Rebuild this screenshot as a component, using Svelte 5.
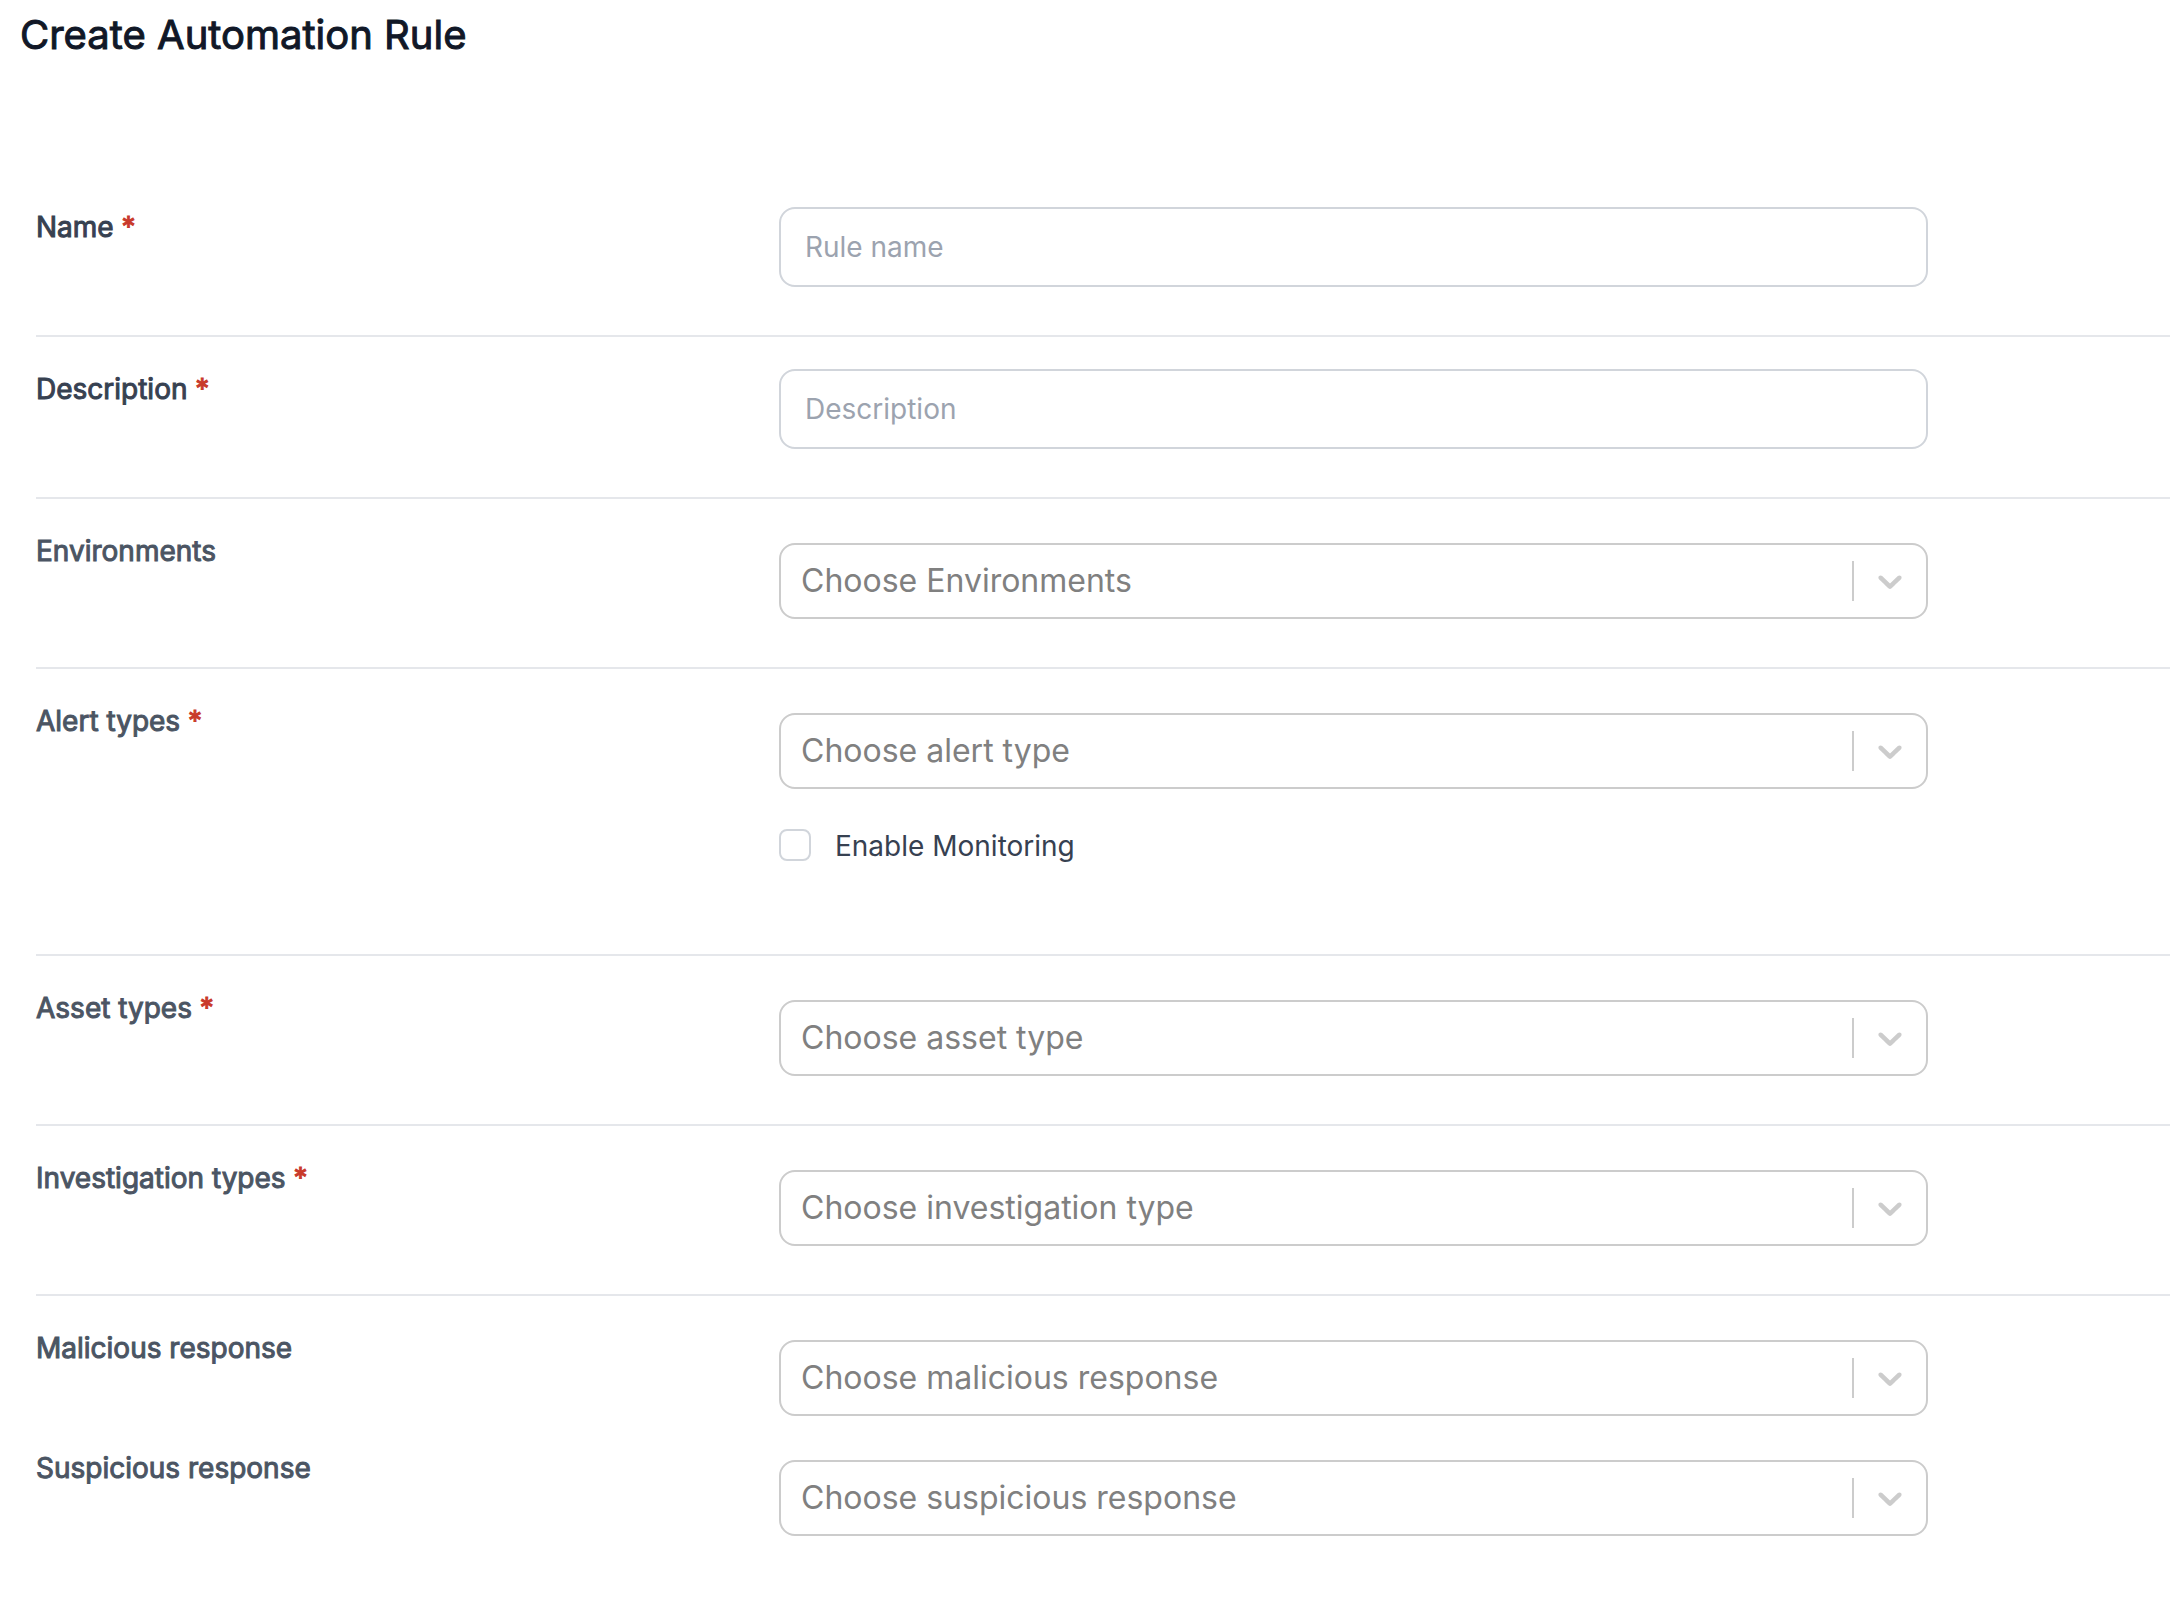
<script>
  const uid = 'rule';
  const rows = [
    { id: 'name', label: 'Name', required: true, kind: 'text', placeholder: 'Rule name' },
    { id: 'description', label: 'Description', required: true, kind: 'text', placeholder: 'Description' },
    { id: 'environments', label: 'Environments', kind: 'select', placeholder: 'Choose Environments' },
    {
      id: 'alert-types',
      label: 'Alert types',
      required: true,
      kind: 'select',
      placeholder: 'Choose alert type',
      checkbox: 'Enable Monitoring'
    },
    { id: 'asset-types', label: 'Asset types', required: true, kind: 'select', placeholder: 'Choose asset type' },
    {
      id: 'investigation-types',
      label: 'Investigation types',
      required: true,
      kind: 'select',
      placeholder: 'Choose investigation type'
    },
    { id: 'malicious', label: 'Malicious response', kind: 'select', placeholder: 'Choose malicious response' },
    {
      id: 'suspicious',
      label: 'Suspicious response',
      kind: 'select',
      placeholder: 'Choose suspicious response',
      joined: true
    }
  ];
</script>

<main>
  <h1>Create Automation Rule</h1>

  <form>
    {#each rows as row (row.id)}
      <div class="row" class:joined={row.joined}>
        <label class="label" class:dark={row.kind === 'text'} for="{uid}-{row.id}">
          {row.label}
          {#if row.required}<span class="required">*</span>{/if}
        </label>

        <div class="field">
          {#if row.kind === 'text'}
            <input class="text" id="{uid}-{row.id}" type="text" placeholder={row.placeholder} />
          {:else}
            <div class="select">
              <select id="{uid}-{row.id}">
                <option value="">{row.placeholder}</option>
              </select>
              <span class="indicator" aria-hidden="true">
                <svg viewBox="0 0 20 20">
                  <path
                    d="M4.516 7.548c0.436-0.446 1.043-0.481 1.576 0l3.908 3.747 3.908-3.747c0.533-0.481 1.141-0.446 1.574 0 0.436 0.445 0.408 1.197 0 1.615-0.406 0.418-4.695 4.502-4.695 4.502-0.217 0.223-0.502 0.335-0.787 0.335s-0.57-0.112-0.789-0.335c0 0-4.287-4.084-4.695-4.502s-0.436-1.17 0-1.615z"
                  />
                </svg>
              </span>
            </div>
          {/if}

          {#if row.checkbox}
            <label class="check">
              <input type="checkbox" />
              {row.checkbox}
            </label>
          {/if}
        </div>
      </div>
    {/each}
  </form>
</main>

<style>
  :global(body) {
    background: #fff;
    font-family: Inter, 'Liberation Sans', sans-serif;
  }

  main {
    padding: 7px 0 0 20px;
  }

  h1 {
    margin: 0;
    color: #111827;
    font-size: 40px;
    font-weight: 400;
    line-height: 56px;
    -webkit-text-stroke: 1px currentColor;
  }

  form {
    margin-top: 112px;
    padding-left: 16px;
  }

  .row {
    display: grid;
    grid-template-columns: 743fr 1391fr;
    align-items: start;
    padding: 32px 0 48px;
    border-top: 2px solid #e5e7eb;
  }

  .row:first-child {
    border-top: 0;
  }

  .row.joined {
    padding-top: 0;
    margin-top: -16px;
    border-top: 0;
  }

  .label {
    color: #4b5563;
    font-size: 28px;
    line-height: 40px;
    -webkit-text-stroke: 1px currentColor;
  }

  .label.dark {
    color: #374151;
  }

  .required {
    color: #c93a2b;
  }

  .field {
    max-width: 1149px;
  }

  .text {
    display: block;
    box-sizing: border-box;
    width: 100%;
    height: 80px;
    margin: 0;
    padding: 0 24px;
    border: 2px solid #d1d5db;
    border-radius: 16px;
    background: #fff;
    color: #374151;
    font: inherit;
    font-size: 28px;
  }

  .text::placeholder {
    color: #9ca3af;
    opacity: 1;
  }

  .select {
    position: relative;
    margin-top: 12px;
  }

  select {
    display: block;
    appearance: none;
    box-sizing: border-box;
    width: 100%;
    height: 76px;
    margin: 0;
    padding: 0 96px 2px 20px;
    border: 2px solid #ccc;
    border-radius: 16px;
    background: #fff;
    color: #808080;
    font: inherit;
    font-size: 32px;
  }

  .indicator {
    position: absolute;
    top: 18px;
    right: 2px;
    display: flex;
    padding: 0 16px;
    border-left: 2px solid #ccc;
    pointer-events: none;
  }

  .indicator svg {
    width: 40px;
    height: 40px;
    fill: #ccc;
  }

  .check {
    display: flex;
    align-items: flex-start;
    gap: 24px;
    margin: 37px 0 40px;
    color: #374151;
    font-size: 28px;
    line-height: 40px;
  }

  .check input {
    appearance: none;
    box-sizing: border-box;
    width: 32px;
    height: 32px;
    margin: 3px 0 0;
    border: 2px solid #d1d5db;
    border-radius: 8px;
    background: #fff;
  }

  .check input:checked {
    background: #374151;
  }
</style>
